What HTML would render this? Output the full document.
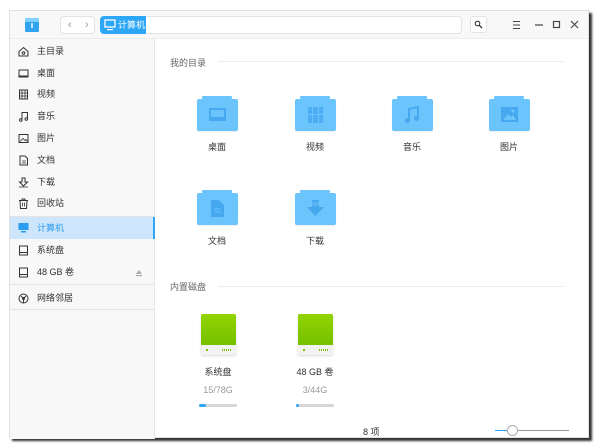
<!DOCTYPE html><html><head><meta charset="utf-8"><style>
*{margin:0;padding:0;box-sizing:border-box}
body{width:600px;height:448px;background:#fff;position:relative;overflow:hidden;font-family:"Liberation Sans","Noto Sans CJK SC",sans-serif;font-size:9px;color:#303030}
.win{position:absolute;left:9px;top:10px;width:580px;height:428px;background:#fff;border:1px solid #e0e0e0;box-shadow:3px 3px 2px #333}
.tb{position:absolute;left:0;top:0;width:100%;height:28px;background:#f8f8f8;border-bottom:1px solid #ececec}
.side{position:absolute;left:0;top:28px;width:145px;height:400px;background:#f8f8f8;border-right:1px solid #e6e6e6}
.a{position:absolute}
.it{position:absolute;left:0;width:145px;height:21px;line-height:21px;padding-left:27px}
.ic{position:absolute;left:8px;top:5px;width:11px;height:11px}
.sep{position:absolute;left:0;width:145px;height:1px;background:#e4e4e4}
.fold{position:absolute;width:41px;height:37px}
.fold .tab{position:absolute;left:5px;top:0;width:30px;height:3px;background:#6cc4fd;border-radius:1px}
.fold .bd{position:absolute;left:0;top:3px;width:41px;height:32px;background:#6cc4fd;border-radius:2px;box-shadow:0 1px 1px rgba(0,0,0,.08)}
.lab{position:absolute;width:80px;text-align:center;font-size:9px}
.gl{position:absolute;background:#46a8ef}
</style></head><body>
<div class="win">
<div class="tb">
 <svg class="a" style="left:13px;top:5px" width="18" height="18" viewBox="0 0 18 18"><rect x="2" y="3" width="14" height="13" rx="1" fill="#2fa3f0"/><rect x="2" y="2" width="14" height="4" rx="1" fill="#7fd0ff"/><rect x="8.3" y="7" width="1.4" height="5" fill="#fff"/></svg>
 <div class="a" style="left:50px;top:5px;width:35px;height:18px;border:1px solid #e3e3e3;border-radius:4px;background:#fff;color:#999;font-size:11px;line-height:16px"><span style="position:absolute;left:7px">‹</span><span style="position:absolute;left:24px">›</span></div>
 <div class="a" style="left:90px;top:5px;width:362px;height:18px;border:1px solid #e3e3e3;border-radius:4px;background:#fff"></div>
 <div class="a" style="left:90px;top:5px;width:46px;height:18px;background:#2ca6f5;border-radius:4px 0 0 4px;color:#fff;font-size:9px;line-height:18px;padding-left:18px">计算机</div>
 <svg class="a" style="left:94px;top:8px" width="12" height="12" viewBox="0 0 12 12"><rect x="1" y="1" width="10" height="7" fill="none" stroke="#fff" stroke-width="1.3"/><rect x="3" y="10" width="6" height="1.2" fill="#fff"/></svg>
 <div class="a" style="left:460px;top:5px;width:17px;height:17px;border:1px solid #e3e3e3;border-radius:3px;background:#fff"></div>
 <svg class="a" style="left:464px;top:9px" width="9" height="9" viewBox="0 0 9 9"><circle cx="3.5" cy="3.5" r="2.3" fill="none" stroke="#333" stroke-width="1.1"/><line x1="5.3" y1="5.3" x2="8" y2="8" stroke="#333" stroke-width="1.3"/></svg>
 <svg class="a" style="left:500px;top:8px" width="75" height="12" viewBox="0 0 75 12"><path d="M3 2.5h7M3 6h7M3 9.5h7" stroke="#444" stroke-width="1"/><path d="M25 6h8" stroke="#444" stroke-width="1.2"/><rect x="43.5" y="2.5" width="6" height="6" fill="none" stroke="#444" stroke-width="1.2"/><path d="M61 2l7 7M68 2l-7 7" stroke="#444" stroke-width="1.1"/></svg>
</div>
<div class="side">
 <div class="it" style="top:2px">主目录<svg class="ic" viewBox="0 0 11 11"><path d="M1 5.5L5.5 1.5 10 5.5V10H1z" fill="none" stroke="#333"/><circle cx="5.5" cy="7" r="1.3" fill="none" stroke="#333"/></svg></div>
 <div class="it" style="top:24px">桌面<svg class="ic" viewBox="0 0 11 11"><rect x="1" y="2" width="9" height="7" fill="none" stroke="#333"/><path d="M1 8h9" stroke="#333"/></svg></div>
 <div class="it" style="top:45px">视频<svg class="ic" viewBox="0 0 11 11"><rect x="1.5" y="1" width="8" height="9" fill="none" stroke="#333"/><path d="M4 1v9M7 1v9M1.5 4h8M1.5 7h8" stroke="#333" stroke-width=".8"/></svg></div>
 <div class="it" style="top:67px">音乐<svg class="ic" viewBox="0 0 11 11"><path d="M4 9V1.5h5.5V8" fill="none" stroke="#333"/><circle cx="2.8" cy="9" r="1.3" fill="none" stroke="#333"/><circle cx="8.3" cy="8" r="1.3" fill="none" stroke="#333"/></svg></div>
 <div class="it" style="top:89px">图片<svg class="ic" viewBox="0 0 11 11"><rect x="1" y="1.5" width="9" height="8" fill="none" stroke="#333"/><path d="M2 8.5l3-3 2 2 1-1 1.5 2" fill="none" stroke="#333" stroke-width=".8"/></svg></div>
 <div class="it" style="top:111px">文档<svg class="ic" viewBox="0 0 11 11"><path d="M2 1h5l2.5 2.5V10H2z" fill="none" stroke="#333"/><path d="M4 6h4M4 8h4" stroke="#333" stroke-width=".8"/></svg></div>
 <div class="it" style="top:133px">下载<svg class="ic" viewBox="0 0 11 11"><path d="M4 1h3v4h2.5L5.5 9 1.5 5H4z" fill="none" stroke="#333"/><path d="M1 10h9" stroke="#333" stroke-width=".8"/></svg></div>
 <div class="it" style="top:154px">回收站<svg class="ic" viewBox="0 0 11 11"><path d="M1 2.5h9M4 2.5V1h3v1.5M2 2.5l.5 8h6l.5-8" fill="none" stroke="#333"/><path d="M4.5 4.5v4M6.5 4.5v4" stroke="#333" stroke-width=".8"/></svg></div>
 <div class="sep" style="top:177px"></div>
 <div class="it" style="top:178px;background:#cde6fb;color:#2c9cf0;height:22px;line-height:22px">计算机<svg class="ic" viewBox="0 0 11 11"><rect x=".5" y="1" width="10" height="7" fill="#2c9cf0"/><rect x="3" y="9" width="5" height="1.5" fill="#2c9cf0"/></svg><div class="a" style="right:0;top:0;width:2px;height:22px;background:#2ca6f5"></div></div>
 <div class="it" style="top:201px">系统盘<svg class="ic" viewBox="0 0 11 11"><rect x="1.5" y="1" width="8" height="9" fill="none" stroke="#333"/><path d="M1.5 7.5h8" stroke="#333"/></svg></div>
 <div class="it" style="top:223px">48 GB 卷<svg class="ic" viewBox="0 0 11 11"><rect x="1.5" y="1" width="8" height="9" fill="none" stroke="#333"/><path d="M1.5 7.5h8" stroke="#333"/></svg><svg class="a" style="left:125px;top:7px" width="8" height="8" viewBox="0 0 8 8"><path d="M4 1L7 5H1z" fill="#aaa"/><rect x="1" y="6" width="6" height="1.2" fill="#aaa"/></svg></div>
 <div class="sep" style="top:245px"></div>
 <div class="it" style="top:249px">网络邻居<svg class="ic" viewBox="0 0 11 11"><circle cx="5.5" cy="5.5" r="4.5" fill="none" stroke="#333"/><circle cx="5.5" cy="5.5" r="1.5" fill="#333"/><path d="M3 3l1.5 1.5M8 3L6.5 4.5M5.5 7v3" stroke="#333"/></svg></div>
 <div class="sep" style="top:270px"></div>
</div>
<div class="a" style="left:160px;top:45px;color:#666;font-size:9px">我的目录</div>
<div class="a" style="left:208px;top:50px;width:346px;height:1px;background:#ececec"></div>
<div class="a" style="left:160px;top:269px;color:#666;font-size:9px">内置磁盘</div>
<div class="a" style="left:208px;top:275px;width:346px;height:1px;background:#ececec"></div>

<div class="fold" style="left:187px;top:85px"><div class="tab"></div><div class="bd"></div><div class="gl" style="left:12px;top:12px;width:17px;height:13px;background:none;border:2px solid #46a8ef"></div><div class="gl" style="left:14px;top:21px;width:13px;height:2px"></div></div>
<div class="lab" style="left:167px;top:129px">桌面</div>
<div class="fold" style="left:285px;top:85px"><div class="tab"></div><div class="bd"></div><div class="gl" style="left:13px;top:11px;width:15px;height:16px;opacity:.8"></div><div class="a" style="left:17px;top:11px;width:1px;height:16px;background:#6cc4fd"></div><div class="a" style="left:23px;top:11px;width:1px;height:16px;background:#6cc4fd"></div><div class="a" style="left:13px;top:18px;width:15px;height:1px;background:#6cc4fd"></div></div>
<div class="lab" style="left:265px;top:129px">视频</div>
<div class="fold" style="left:382px;top:85px"><div class="tab"></div><div class="bd"></div><svg class="a" style="left:12px;top:10px" width="17" height="18" viewBox="0 0 17 18"><path d="M5 14V3l9-2v11" fill="none" stroke="#46a8ef" stroke-width="2"/><circle cx="3.5" cy="14.5" r="2.5" fill="#46a8ef"/><circle cx="12.5" cy="12.5" r="2.5" fill="#46a8ef"/></svg></div>
<div class="lab" style="left:362px;top:129px">音乐</div>
<div class="fold" style="left:479px;top:85px"><div class="tab"></div><div class="bd"></div><svg class="a" style="left:12px;top:11px" width="17" height="15" viewBox="0 0 17 15"><rect width="17" height="15" fill="#46a8ef"/><path d="M2 13l5-6 3 3 2-2 3 5z" fill="#6cc4fd"/><circle cx="12" cy="4" r="1.6" fill="#6cc4fd"/></svg></div>
<div class="lab" style="left:459px;top:129px">图片</div>
<div class="fold" style="left:187px;top:179px"><div class="tab"></div><div class="bd"></div><svg class="a" style="left:14px;top:10px" width="13" height="17" viewBox="0 0 13 17"><path d="M0 0h8l5 5v12H0z" fill="#46a8ef"/><path d="M3 9h7M3 12h7" stroke="#6cc4fd"/></svg></div>
<div class="lab" style="left:167px;top:223px">文档</div>
<div class="fold" style="left:285px;top:179px"><div class="tab"></div><div class="bd"></div><svg class="a" style="left:12px;top:10px" width="17" height="17" viewBox="0 0 17 17"><path d="M5 0h7v7h5l-8.5 9L0 7h5z" fill="#46a8ef"/><path d="M5 3h7M5 5h7" stroke="#6cc4fd"/></svg></div>
<div class="lab" style="left:265px;top:223px">下载</div>

<div class="a" style="left:191px;top:303px;width:35px;height:41px;border-radius:2px;background:#f2f2f2;box-shadow:0 1px 2px rgba(0,0,0,.15);overflow:hidden"><div style="height:31px;background:linear-gradient(#92d400,#76c000)"></div><div class="a" style="left:5px;top:35px;width:2px;height:2px;background:#7bc300"></div><div class="a" style="left:21px;top:35px;width:10px;height:2px;background:repeating-linear-gradient(90deg,#7bc300 0 1px,transparent 1px 2px)"></div></div>
<div class="lab" style="left:168px;top:354px">系统盘</div>
<div class="lab" style="left:168px;top:374px;color:#999">15/78G</div>
<div class="a" style="left:189px;top:393px;width:38px;height:3px;border-radius:2px;background:#d6d6d6"><div style="width:7px;height:3px;border-radius:2px;background:#2ca6f5"></div></div>
<div class="a" style="left:288px;top:303px;width:35px;height:41px;border-radius:2px;background:#f2f2f2;box-shadow:0 1px 2px rgba(0,0,0,.15);overflow:hidden"><div style="height:31px;background:linear-gradient(#92d400,#76c000)"></div><div class="a" style="left:5px;top:35px;width:2px;height:2px;background:#7bc300"></div><div class="a" style="left:21px;top:35px;width:10px;height:2px;background:repeating-linear-gradient(90deg,#7bc300 0 1px,transparent 1px 2px)"></div></div>
<div class="lab" style="left:265px;top:354px">48 GB 卷</div>
<div class="lab" style="left:265px;top:374px;color:#999">3/44G</div>
<div class="a" style="left:286px;top:393px;width:38px;height:3px;border-radius:2px;background:#d6d6d6"><div style="width:3px;height:3px;border-radius:2px;background:#2ca6f5"></div></div>

<div class="a" style="left:353px;top:414px;font-size:9px">8 项</div>
<div class="a" style="left:485px;top:419px;width:20px;height:1px;background:#2ca6f5"></div>
<div class="a" style="left:505px;top:419px;width:54px;height:1px;background:#999"></div>
<div class="a" style="left:497px;top:414px;width:11px;height:11px;border-radius:50%;background:#fff;border:1px solid #aaa"></div>
</div>
</body></html>
